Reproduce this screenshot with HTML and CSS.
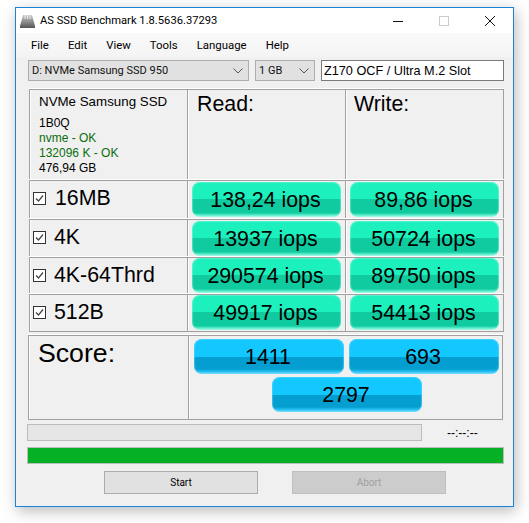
FILE: index.html
```html
<!DOCTYPE html>
<html lang="en">
<head>
<meta charset="utf-8">
<title>AS SSD Benchmark</title>
<link rel="stylesheet" href="styles.css">
</head>
<body>
<div class="window">
  <div class="titlebar">
    <svg class="app-icon" width="17" height="14" viewBox="0 0 17 14"><defs><linearGradient id="d" x1="0" y1="0" x2="0" y2="1"><stop offset="0" stop-color="#c9c9c9"/><stop offset="1" stop-color="#555"/></linearGradient></defs><path d="M4 1h9l3 11v2H1v-2z" fill="url(#d)"/><path d="M6 1v4M8.500 1v4M11 1v4" stroke="#eee" stroke-width="1"/></svg>
    <span class="title">AS SSD Benchmark 1.8.5636.37293</span>
    <div class="controls">
      <svg width="12" height="12" viewBox="0 0 12 12"><path d="M1 6.500h10" stroke="#111" stroke-width="1"/></svg>
      <svg width="12" height="12" viewBox="0 0 12 12"><rect x=".5" y=".5" width="9" height="9" transform="translate(1 1)" fill="none" stroke="#ccc"/></svg>
      <svg width="12" height="12" viewBox="0 0 12 12"><path d="M1 1l10 10M11 1L1 11" stroke="#111" stroke-width="1"/></svg>
    </div>
  </div>
  <div class="menubar">
    <span>File</span><span>Edit</span><span>View</span><span>Tools</span><span>Language</span><span>Help</span>
  </div>
  <div class="toolbar">
    <div class="select drive"><span>D: NVMe Samsung SSD 950</span><svg width="10" height="6" viewBox="0 0 10 6"><path d="M.5.500L5 5 9.500.500" fill="none" stroke="#555"/></svg></div>
    <div class="select size"><span>1 GB</span><svg width="10" height="6" viewBox="0 0 10 6"><path d="M.5.500L5 5 9.500.500" fill="none" stroke="#555"/></svg></div>
    <div class="textbox">Z170 OCF / Ultra M.2 Slot</div>
  </div>
  <div class="results">
    <div class="cell info">
      <div class="drive-name">NVMe Samsung SSD</div>
      <div class="line first">1B0Q</div>
      <div class="line ok">nvme - OK</div>
      <div class="line ok">132096 K - OK</div>
      <div class="line">476,94 GB</div>
    </div>
    <div class="cell heading">Read:</div>
    <div class="cell heading write">Write:</div>

    <div class="cell label"><svg class="check" width="13" height="13" viewBox="0 0 13 13"><rect x=".5" y=".5" width="12" height="12" fill="#fff" stroke="#333"/><path d="M3 6.500l2.500 2.500L10 3.500" fill="none" stroke="#444" stroke-width="1.200"/></svg><span class="wide">16MB</span></div>
    <div class="cell val"><div class="pill green">138,24 iops</div></div>
    <div class="cell val"><div class="pill green">89,86 iops</div></div>

    <div class="cell label"><svg class="check" width="13" height="13" viewBox="0 0 13 13"><rect x=".5" y=".5" width="12" height="12" fill="#fff" stroke="#333"/><path d="M3 6.500l2.500 2.500L10 3.500" fill="none" stroke="#444" stroke-width="1.200"/></svg><span>4K</span></div>
    <div class="cell val"><div class="pill green">13937 iops</div></div>
    <div class="cell val"><div class="pill green">50724 iops</div></div>

    <div class="cell label"><svg class="check" width="13" height="13" viewBox="0 0 13 13"><rect x=".5" y=".5" width="12" height="12" fill="#fff" stroke="#333"/><path d="M3 6.500l2.500 2.500L10 3.500" fill="none" stroke="#444" stroke-width="1.200"/></svg><span>4K-64Thrd</span></div>
    <div class="cell val tight"><div class="pill green">290574 iops</div></div>
    <div class="cell val tight"><div class="pill green">89750 iops</div></div>

    <div class="cell label"><svg class="check" width="13" height="13" viewBox="0 0 13 13"><rect x=".5" y=".5" width="12" height="12" fill="#fff" stroke="#333"/><path d="M3 6.500l2.500 2.500L10 3.500" fill="none" stroke="#444" stroke-width="1.200"/></svg><span>512B</span></div>
    <div class="cell val tight"><div class="pill green">49917 iops</div></div>
    <div class="cell val tight"><div class="pill green">54413 iops</div></div>
  </div>
  <div class="score">
    <div class="cell score-label">Score:</div>
    <div class="cell score-vals">
      <div class="pill blue">1411</div>
      <div class="pill blue">693</div>
      <div class="pill blue total">2797</div>
    </div>
  </div>
  <div class="progress-row">
    <div class="bar empty"></div>
    <div class="time">--:--:--</div>
  </div>
  <div class="bar full"></div>
  <div class="buttons">
    <div class="btn">Start</div>
    <div class="btn off">Abort</div>
  </div>
</div>
</body>
</html>
```
FILE: styles.css
```css
html, body { margin: 0; padding: 0; background: #fff; overflow: hidden; }
body { width: 529px; height: 523px; font-family: "Liberation Sans", Arial, sans-serif; color: #000; }
.window {
  box-sizing: border-box;
  width: 499px; height: 500px;
  margin: 7px 0 0 15px;
  border: 1px solid #1883d7;
  background: #f0f0f0;
  box-shadow: 2px 4px 14px rgba(0,0,0,.28);
}
.titlebar { height: 25px; background: #fff; display: flex; align-items: center; padding-left: 3px; }
.app-icon { margin-right: 4px; }
.title { font: 11.200px Roboto, sans-serif; }
.controls { margin-left: auto; display: flex; gap: 34px; padding-right: 17px; }
.menubar {
  height: 24px; box-sizing: border-box;
  background: linear-gradient(#f9f9f9, #f4f4f4);
  display: flex; align-items: center; gap: 19px; padding: 0 0 0 15px;
  font: 11.400px Roboto, sans-serif;
}
.toolbar { display: flex; height: 21px; margin: 3px 0 0 12px; }
.select {
  box-sizing: border-box; height: 21px;
  border: 1px solid #adadad; background: #e1e1e1;
  display: flex; align-items: center; justify-content: space-between;
  padding: 0 5px 0 3px; font: 11px Roboto, sans-serif; color: #111;
}
.drive { width: 221px; }
.size { width: 60px; margin-left: 6px; }
.textbox {
  box-sizing: border-box; width: 183px; height: 21px; margin-left: 6px;
  border: 1px solid #7a7a7a; background: #fff;
  font-size: 12.700px; line-height: 20px; padding-left: 2px;
}
.results {
  display: grid; margin: 8px 0 0 13px; width: 475px;
  grid-template-columns: 158px 158px 159px;
  grid-template-rows: 91px 39px 38px 37px 37px;
  border-right: 1px solid #a0a0a0; border-bottom: 1px solid #a0a0a0;
  box-sizing: border-box; height: 243px;
}
.cell {
  box-sizing: border-box; min-width: 0;
  border-left: 1px solid #a0a0a0; border-top: 1px solid #a0a0a0;
  box-shadow: inset 1px 0 0 #fff, 0 -1px 0 #fff;
}
.info { padding: 4px 0 0 9px; font-size: 12px; }
.drive-name { font-size: 13.330px; line-height: 15px; }
.line { line-height: 15px; height: 15px; }
.line.first { margin-top: 7px; }
.ok { color: #0b6e0b; }
.heading { font-size: 21.330px; line-height: 24px; padding: 2px 0 0 9px; }
.write { padding-left: 8px; }
.label { display: flex; align-items: flex-start; font-size: 21.330px; line-height: 24px; padding: 5px 0 0 3px; }
.check { margin: 6px 8px 0 0; flex: none; }
.wide { margin-left: 1px; }
.val { padding: 1px 0 0 4px; }
.val.tight { padding-top: 0; }
.pill {
  box-sizing: border-box; width: 149px; height: 35px; padding-right: 2px;
  border-radius: 8px; text-align: center;
  font-size: 21.330px; line-height: 36px;
}
.green {
  background: linear-gradient(#1cf0bd 0, #1cf0bd 50%, #0fcb9f 50%, #0fcb9f 88%, #6cf2d4 96%, #b5f7e8 100%);
  box-shadow: inset 0 0 1px 1px rgba(150,250,225,.45);
}
.blue {
  width: 150px;
  background: linear-gradient(#13c8ff 0, #13c8ff 50%, #049fd0 50%, #049fd0 86%, #2cc4f7 94%, #8ae2fb 100%);
  box-shadow: inset 0 0 1px 1px rgba(100,215,250,.55);
}
.score {
  display: grid; width: 475px; height: 85px; margin: 3px 0 0 12px;
  grid-template-columns: 160px 315px;
  box-sizing: border-box;
  border-right: 1px solid #a0a0a0; border-bottom: 1px solid #a0a0a0;
}
.score-label { font-size: 26.670px; line-height: 30px; padding: 2px 0 0 9px; }
.score-vals {
  display: grid; grid-template-columns: 150px 150px; column-gap: 5px; row-gap: 3px;
  align-content: start; padding: 3px 0 0 5px;
}
.total { grid-column: 1 / span 2; margin-left: 78px; }
.progress-row { display: flex; align-items: center; margin: 4px 0 0 11px; height: 17px; }
.bar { box-sizing: border-box; height: 17px; border: 1px solid #bcbcbc; background: #e6e6e6; }
.empty { width: 395px; }
.time { font-size: 12px; margin-left: 25px; line-height: 14px; }
.full { width: 477px; margin: 6px 0 0 11px; background: #06b025; }
.buttons { display: flex; margin: 7px 0 0 88px; gap: 34px; }
.btn {
  box-sizing: border-box; width: 154px; height: 23px;
  border: 1px solid #adadad; background: #e1e1e1;
  text-align: center; font: 10px/21px Roboto, sans-serif;
}
.off { background: #cccccc; border-color: #bfbfbf; color: #a0a0a0; }
```
